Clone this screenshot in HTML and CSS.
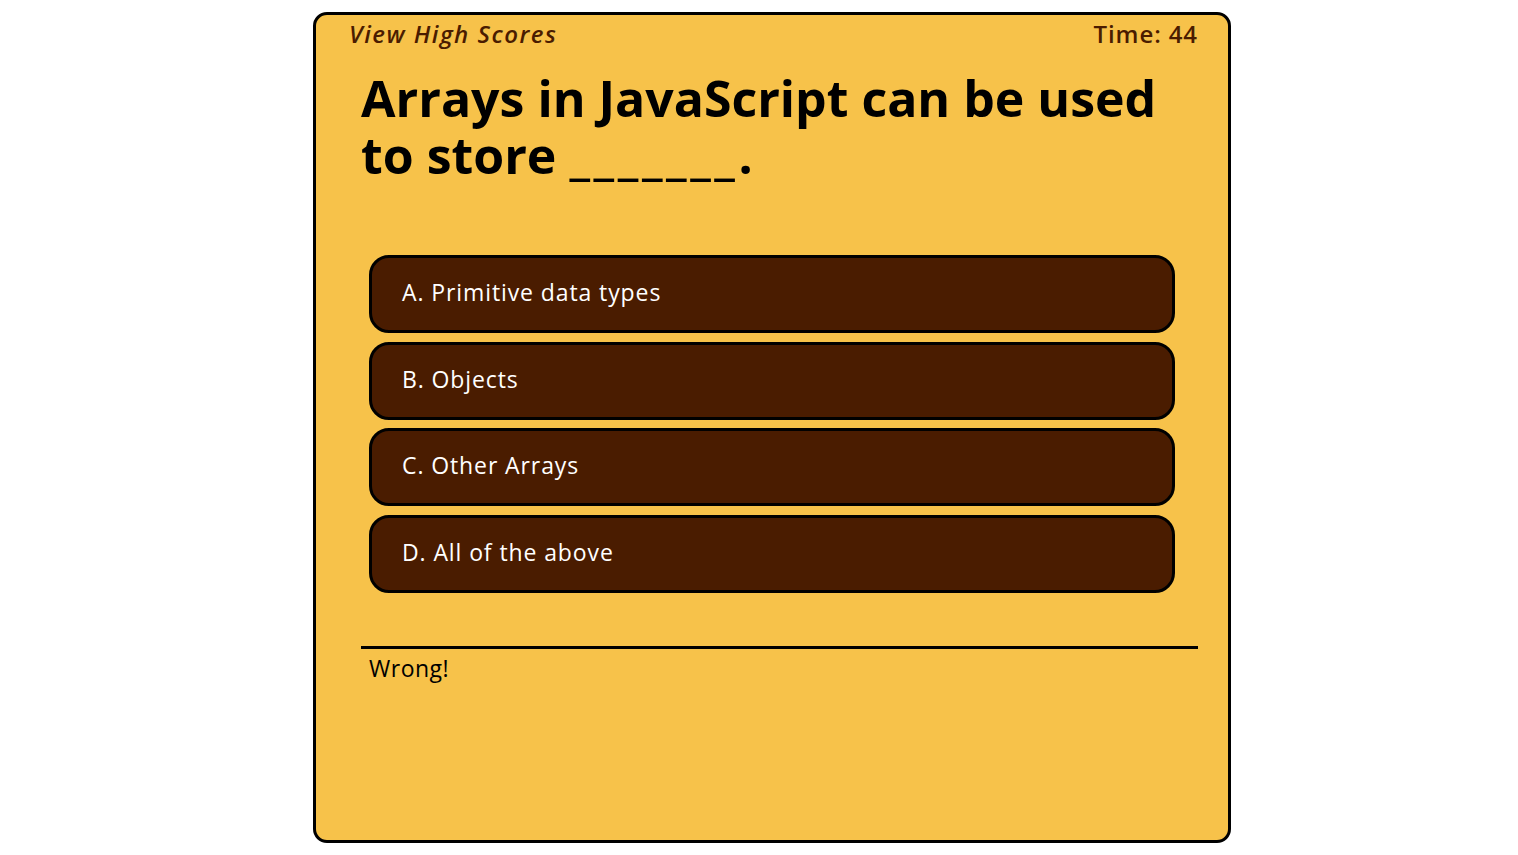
FILE: index.html
```html
<!DOCTYPE html>
<html>
<head>
<meta charset="utf-8">
<link rel="stylesheet" href="styles.css">
</head>
<body>
<div class="card">
  <header class="top">
    <a class="scores">View High Scores</a>
    <span class="timer">Time: 44</span>
  </header>
  <main class="content">
    <h1 class="question">Arrays in JavaScript can be used to store <span class="blank">_______.</span></h1>
    <div class="choices">
      <button class="choice">A. Primitive data types</button>
      <button class="choice">B. Objects</button>
      <button class="choice">C. Other Arrays</button>
      <button class="choice">D. All of the above</button>
    </div>
    <div class="result">Wrong!</div>
  </main>
</div>
</body>
</html>
```
FILE: styles.css
```css
* { box-sizing: border-box; }
html, body { margin: 0; padding: 0; background: #fff; }
body {
  font-family: "Open Sans", sans-serif;
  padding-top: 12px;
}
.card {
  width: 918px;
  height: 831px;
  margin: 0 0 0 313px;
  background: #f7c24a;
  border: 3px solid #000;
  border-radius: 14px;
  padding: 4px 30px 0 33px;
}
.top {
  display: flex;
  justify-content: space-between;
  height: 30px;
  line-height: 30px;
  color: #4a1c00;
  font-size: 24px;
  font-weight: 600;
}
.scores { font-style: italic; letter-spacing: 1.5px; }
.timer { letter-spacing: 0.9px; }
.content { padding: 0 0 0 12px; }
.question {
  margin: 21px 0 0 0;
  font-size: 50px;
  line-height: 57px;
  font-weight: 700;
  color: #000;
}
.blank { letter-spacing: 3.6px; }
.choices {
  display: flex;
  flex-direction: column;
  gap: 8.67px;
  margin: 71px 23px 0 8px;
}
.choice {
  height: 78px;
  background: #4a1c00;
  border: 3px solid #000;
  border-radius: 20px;
  color: #fff;
  font-family: inherit;
  font-size: 23px;
  letter-spacing: 0.9px;
  text-align: left;
  padding: 0 0 4px 30px;
}
.result {
  margin-top: 53px;
  border-top: 3px solid #000;
  padding: 4px 0 0 8px;
  font-size: 23px;
  line-height: 30px;
  letter-spacing: 0.5px;
  color: #000;
}
```
